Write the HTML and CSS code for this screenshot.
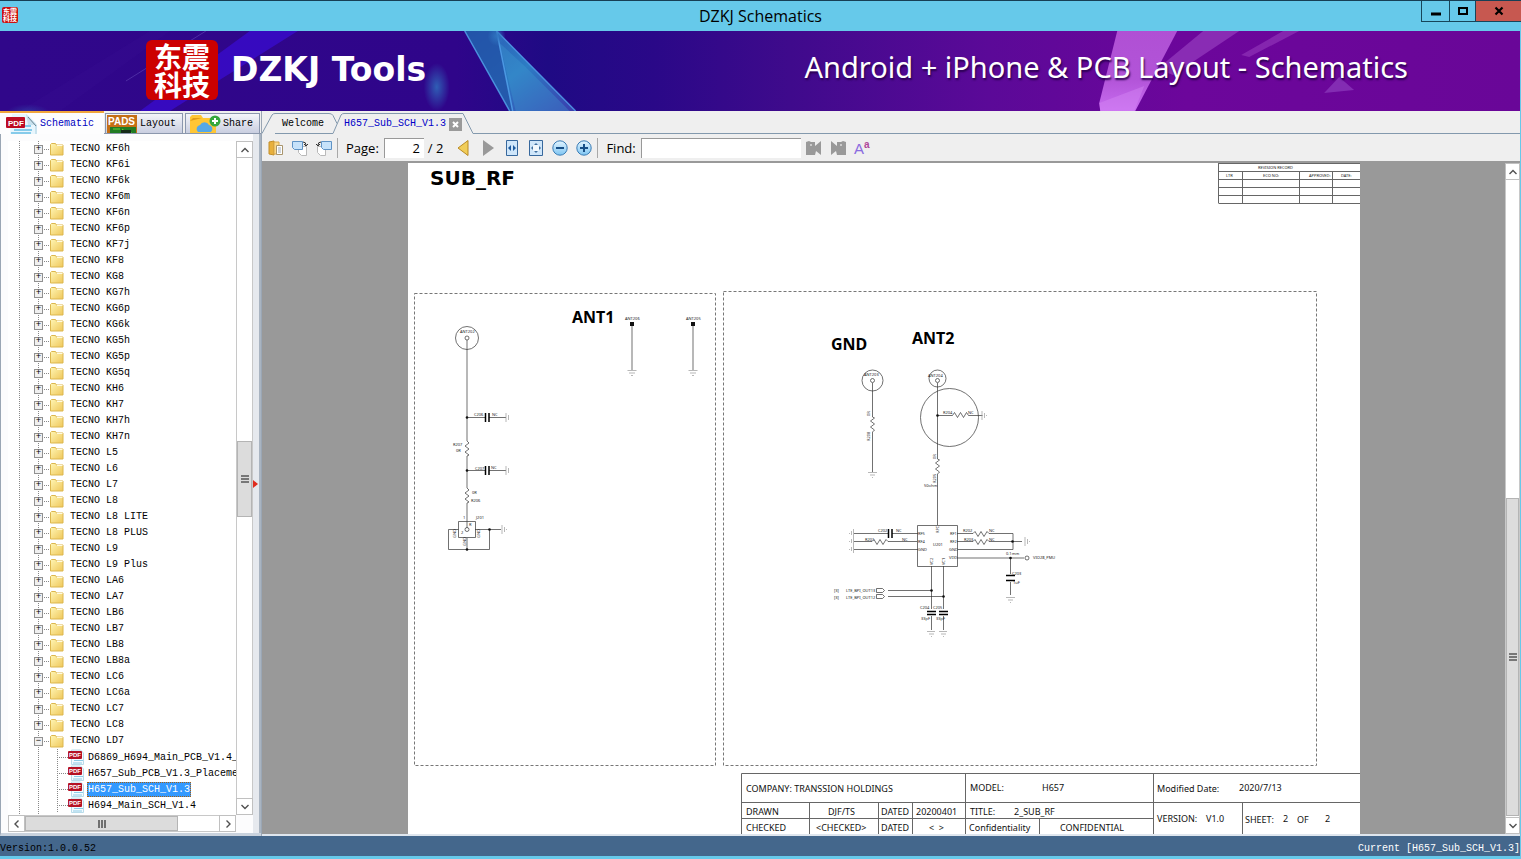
FILE: index.html
```html
<!DOCTYPE html>
<html lang="en">
<head>
<meta charset="utf-8">
<title>DZKJ Schematics</title>
<link rel="stylesheet" href="styles.css">
</head>
<body>
<svg class="defs" aria-hidden="true">
  <defs>
    <linearGradient id="gold" x1="0" y1="0" x2="1" y2="1"><stop offset="0" stop-color="#fff6b4"/><stop offset="1" stop-color="#efc75a"/></linearGradient>
    <linearGradient id="sky" x1="0" y1="0" x2="0" y2="1"><stop offset="0" stop-color="#e4f5ff"/><stop offset="1" stop-color="#7cc4f2"/></linearGradient>
    <symbol id="folder" viewBox="0 0 14 14"><path d="M.5 2.5l1-1h4l1 1.500h6.500v10h-12.500z" fill="url(#gold)" stroke="#dcb74e"/><path d="M7 3.500h5.500" stroke="#fffbe0"/></symbol>
    <symbol id="pdf" viewBox="0 0 16 16"><path d="M3.500 1h9l3 3v11.500h-12z" fill="#f4fbff" stroke="#b8dcea"/><path d="M6 11.500h9M5 14h9" stroke="#8ccbe6"/><rect y="2" width="14" height="8" rx="1" fill="#b51224"/><text x="1" y="8" class="pdf-text">PDF</text></symbol>
    <symbol id="up" viewBox="0 0 10 10"><path d="M1.500 7L5 3.500 8.500 7" fill="none" stroke="#505050" stroke-width="1.400"/></symbol>
    <symbol id="down" viewBox="0 0 10 10"><path d="M1.500 3L5 6.500 8.500 3" fill="none" stroke="#505050" stroke-width="1.400"/></symbol>
    <symbol id="left" viewBox="0 0 10 10"><path d="M6.500 1.500L3 5l3.500 3.500" fill="none" stroke="#505050" stroke-width="1.400"/></symbol>
    <symbol id="right" viewBox="0 0 10 10"><path d="M3.500 1.500L7 5 3.500 8.500" fill="none" stroke="#505050" stroke-width="1.400"/></symbol>
    <symbol id="grip" viewBox="0 0 8 8"><path d="M0 1h8M0 4h8M0 7h8" stroke="#555" stroke-width="1.600"/></symbol>
  </defs>
</svg>

<header class="titlebar">
  <div class="app-icon">东震<br>科技</div>
  <h1 class="app-title">DZKJ Schematics</h1>
  <div class="window-buttons">
    <button class="win" aria-label="Minimize"><svg width="12" height="12"><path d="M1 9h10" stroke="#000" stroke-width="3"/></svg></button>
    <button class="win" aria-label="Maximize"><svg width="12" height="12"><path d="M2 3h8v6H2z" fill="none" stroke="#000" stroke-width="2"/></svg></button>
    <button class="win close" aria-label="Close"><svg width="12" height="12"><path d="M2.500 2.500l7 7M9.500 2.500l-7 7" stroke="#000" stroke-width="2.200"/></svg></button>
  </div>
</header>

<section class="banner">
  <svg class="banner-art" viewBox="0 0 1521 80" preserveAspectRatio="none" aria-hidden="true">
    <defs>
      <linearGradient id="beam" x1="0" y1="0" x2="1" y2="1"><stop offset="0" stop-color="#2a58b4"/><stop offset=".5" stop-color="#2d7cc4"/><stop offset="1" stop-color="#3a3cae"/></linearGradient>
      <linearGradient id="pink" x1="0" y1="0" x2="0" y2="1"><stop offset="0" stop-color="#b050d4"/><stop offset=".6" stop-color="#b254d8"/><stop offset="1" stop-color="#c86cf0"/></linearGradient>
      <radialGradient id="glow"><stop offset="0" stop-color="#2f74c0"/><stop offset="1" stop-color="#2f74c0" stop-opacity="0"/></radialGradient>
    </defs>
    <path d="M250 0h48L170 80h-30z" fill="#3a0cd0" opacity=".75"/>
    <path d="M150 0h20L60 80H20z" fill="#3c1696" opacity=".2"/>
    <path d="M206 0L126 50" stroke="#5a3cb0" opacity=".7"/>
    <ellipse cx="437" cy="56" rx="13" ry="24" fill="url(#glow)" opacity=".8"/>
    <ellipse cx="28" cy="82" rx="22" ry="9" fill="url(#glow)" opacity=".4"/>
    <path d="M465 0h32l79 80h-66z" fill="url(#beam)"/>
    <path d="M465 0h32l16 80h-3z" fill="#2252a6" opacity=".8"/>
    <path d="M500 12l26 24 44 44h-54z" fill="#3f9ad2" opacity=".35"/>
    <path d="M465 0l45 80M497 0l16 80M497 0l79 80" stroke="#54a4ec" stroke-width="1.500" fill="none" opacity=".8"/>
    <ellipse cx="497" cy="5" rx="9" ry="10" fill="url(#glow)"/>
    <path d="M1118 0h60l-42 80h-35l-1-8z" fill="url(#pink)"/>
    <path d="M1100 72l45-17-10 25h-34z" fill="#d488f4" opacity=".45"/>
    <path d="M1204 0h36l-66 44-16-6z" fill="#a34cc8" opacity=".55"/>
    <path d="M1284 0h16l-50 26-8-2z" fill="#a34cc8" opacity=".45"/>
    <path d="M1340 46l15 13-30 3z" fill="#9040c0" opacity=".65"/>
  </svg>
  <div class="brand"><div class="logo">东震<br>科技</div><span class="brand-name">DZKJ Tools</span></div>
  <p class="tagline">Android + iPhone &amp; PCB Layout - Schematics</p>
</section>

<main class="workspace">
  <aside class="sidebar">
    <nav class="side-tabs">
      <button class="side-tab active"><svg width="32" height="20" viewBox="0 0 32 20"><path d="M6 0h15l9 9v11H4z" fill="#e8f6fd"/><path d="M20 0l11 11v9h-2V11h-7z" fill="#c8e2ee"/><path d="M22 3l8 9" stroke="#6b8490"/><path d="M8 16h18M5 19h20M18 12h7" stroke="#86cbea" stroke-width="2"/><rect y="3" width="19" height="11" rx="1" fill="#bd0b23"/><text x="2" y="12" class="pdf-big">PDF</text></svg>Schematic</button>
      <button class="side-tab"><svg width="32" height="20" viewBox="0 0 32 20"><rect x="1" y="1" width="30" height="19" fill="#c46f16"/><rect x="4" y="13" width="26" height="7" fill="#217b24"/><path d="M7 15h7M16 15l4 3h5v2" stroke="#69cf35" fill="none"/><rect x="15" y="16" width="10" height="4" fill="#152c19"/><text x="2" y="11" class="pads">PADS</text></svg>Layout</button>
      <button class="side-tab"><svg width="32" height="20" viewBox="0 0 32 20"><path d="M1 3l2-2h9l2 3h13v16H1z" fill="#ffc634"/><path d="M1 7l12-3h-9z" fill="#e29d16"/><path d="M9 18a4 4 0 0 1 2-7 5 5 0 0 1 9 0 4 4 0 0 1 2 7z" fill="#55a8e8"/><circle cx="26" cy="7" r="5.500" fill="#35a83d"/><path d="M26 4v6M23 7h6" stroke="#fff" stroke-width="2"/></svg>Share</button>
    </nav>
    <div class="side-body">
      <div class="tree-frame">
        <div class="tree-row">
          <ul class="tree">
            <li class="node"><button class="toggle" aria-label="Expand">+</button><svg class="ico"><use href="#folder"/></svg>TECNO KF6h</li>
            <li class="node"><button class="toggle" aria-label="Expand">+</button><svg class="ico"><use href="#folder"/></svg>TECNO KF6i</li>
            <li class="node"><button class="toggle" aria-label="Expand">+</button><svg class="ico"><use href="#folder"/></svg>TECNO KF6k</li>
            <li class="node"><button class="toggle" aria-label="Expand">+</button><svg class="ico"><use href="#folder"/></svg>TECNO KF6m</li>
            <li class="node"><button class="toggle" aria-label="Expand">+</button><svg class="ico"><use href="#folder"/></svg>TECNO KF6n</li>
            <li class="node"><button class="toggle" aria-label="Expand">+</button><svg class="ico"><use href="#folder"/></svg>TECNO KF6p</li>
            <li class="node"><button class="toggle" aria-label="Expand">+</button><svg class="ico"><use href="#folder"/></svg>TECNO KF7j</li>
            <li class="node"><button class="toggle" aria-label="Expand">+</button><svg class="ico"><use href="#folder"/></svg>TECNO KF8</li>
            <li class="node"><button class="toggle" aria-label="Expand">+</button><svg class="ico"><use href="#folder"/></svg>TECNO KG8</li>
            <li class="node"><button class="toggle" aria-label="Expand">+</button><svg class="ico"><use href="#folder"/></svg>TECNO KG7h</li>
            <li class="node"><button class="toggle" aria-label="Expand">+</button><svg class="ico"><use href="#folder"/></svg>TECNO KG6p</li>
            <li class="node"><button class="toggle" aria-label="Expand">+</button><svg class="ico"><use href="#folder"/></svg>TECNO KG6k</li>
            <li class="node"><button class="toggle" aria-label="Expand">+</button><svg class="ico"><use href="#folder"/></svg>TECNO KG5h</li>
            <li class="node"><button class="toggle" aria-label="Expand">+</button><svg class="ico"><use href="#folder"/></svg>TECNO KG5p</li>
            <li class="node"><button class="toggle" aria-label="Expand">+</button><svg class="ico"><use href="#folder"/></svg>TECNO KG5q</li>
            <li class="node"><button class="toggle" aria-label="Expand">+</button><svg class="ico"><use href="#folder"/></svg>TECNO KH6</li>
            <li class="node"><button class="toggle" aria-label="Expand">+</button><svg class="ico"><use href="#folder"/></svg>TECNO KH7</li>
            <li class="node"><button class="toggle" aria-label="Expand">+</button><svg class="ico"><use href="#folder"/></svg>TECNO KH7h</li>
            <li class="node"><button class="toggle" aria-label="Expand">+</button><svg class="ico"><use href="#folder"/></svg>TECNO KH7n</li>
            <li class="node"><button class="toggle" aria-label="Expand">+</button><svg class="ico"><use href="#folder"/></svg>TECNO L5</li>
            <li class="node"><button class="toggle" aria-label="Expand">+</button><svg class="ico"><use href="#folder"/></svg>TECNO L6</li>
            <li class="node"><button class="toggle" aria-label="Expand">+</button><svg class="ico"><use href="#folder"/></svg>TECNO L7</li>
            <li class="node"><button class="toggle" aria-label="Expand">+</button><svg class="ico"><use href="#folder"/></svg>TECNO L8</li>
            <li class="node"><button class="toggle" aria-label="Expand">+</button><svg class="ico"><use href="#folder"/></svg>TECNO L8 LITE</li>
            <li class="node"><button class="toggle" aria-label="Expand">+</button><svg class="ico"><use href="#folder"/></svg>TECNO L8 PLUS</li>
            <li class="node"><button class="toggle" aria-label="Expand">+</button><svg class="ico"><use href="#folder"/></svg>TECNO L9</li>
            <li class="node"><button class="toggle" aria-label="Expand">+</button><svg class="ico"><use href="#folder"/></svg>TECNO L9 Plus</li>
            <li class="node"><button class="toggle" aria-label="Expand">+</button><svg class="ico"><use href="#folder"/></svg>TECNO LA6</li>
            <li class="node"><button class="toggle" aria-label="Expand">+</button><svg class="ico"><use href="#folder"/></svg>TECNO LA7</li>
            <li class="node"><button class="toggle" aria-label="Expand">+</button><svg class="ico"><use href="#folder"/></svg>TECNO LB6</li>
            <li class="node"><button class="toggle" aria-label="Expand">+</button><svg class="ico"><use href="#folder"/></svg>TECNO LB7</li>
            <li class="node"><button class="toggle" aria-label="Expand">+</button><svg class="ico"><use href="#folder"/></svg>TECNO LB8</li>
            <li class="node"><button class="toggle" aria-label="Expand">+</button><svg class="ico"><use href="#folder"/></svg>TECNO LB8a</li>
            <li class="node"><button class="toggle" aria-label="Expand">+</button><svg class="ico"><use href="#folder"/></svg>TECNO LC6</li>
            <li class="node"><button class="toggle" aria-label="Expand">+</button><svg class="ico"><use href="#folder"/></svg>TECNO LC6a</li>
            <li class="node"><button class="toggle" aria-label="Expand">+</button><svg class="ico"><use href="#folder"/></svg>TECNO LC7</li>
            <li class="node"><button class="toggle" aria-label="Expand">+</button><svg class="ico"><use href="#folder"/></svg>TECNO LC8</li>
            <li class="node"><button class="toggle open" aria-label="Collapse">−</button><svg class="ico"><use href="#folder"/></svg>TECNO LD7</li>
            <li class="node file"><svg class="ico"><use href="#pdf"/></svg><span class="name">D6869_H694_Main_PCB_V1.4_</span></li>
            <li class="node file"><svg class="ico"><use href="#pdf"/></svg><span class="name">H657_Sub_PCB_V1.3_Placeme</span></li>
            <li class="node file"><svg class="ico"><use href="#pdf"/></svg><span class="name selected">H657_Sub_SCH_V1.3</span></li>
            <li class="node file"><svg class="ico"><use href="#pdf"/></svg><span class="name">H694_Main_SCH_V1.4</span></li>
          </ul>
          <div class="scroll-v">
            <button class="arrow" aria-label="Scroll up"><svg class="chev"><use href="#up"/></svg></button>
            <div class="track tree-v"><div class="thumb"><svg class="grip"><use href="#grip"/></svg></div></div>
            <button class="arrow" aria-label="Scroll down"><svg class="chev"><use href="#down"/></svg></button>
          </div>
        </div>
        <div class="scroll-h">
          <button class="arrow" aria-label="Scroll left"><svg class="chev"><use href="#left"/></svg></button>
          <div class="track tree-h"><div class="thumb"><svg class="grip turned"><use href="#grip"/></svg></div></div>
          <button class="arrow" aria-label="Scroll right"><svg class="chev"><use href="#right"/></svg></button>
        </div>
      </div>
      <div class="splitter"><svg width="5" height="8"><path d="M0 0l5 4-5 4z" fill="#e02a1c"/></svg></div>
    </div>
  </aside>

  <section class="document">
    <nav class="doc-tabs">
      <svg class="slant" width="13" height="21"><path d="M0 20.500L10 2q1-1.500 3-1.500" fill="none" stroke="#8399ad"/></svg>
      <button class="doc-tab back">Welcome</button>
      <svg class="slant" width="15" height="21"><path d="M0 .500q3 0 4 2l4 8M4 20.500L12 2q1-1.500 3-1.500M0 20.500h4" fill="none" stroke="#8399ad"/></svg>
      <div class="doc-tab current"><button class="tab-name">H657_Sub_SCH_V1.3</button><button class="tab-close" aria-label="Close tab"><svg width="7" height="7"><path d="M1 1l5 5M6 1L1 6" stroke="#fff" stroke-width="2"/></svg></button></div>
      <svg class="slant" width="10" height="21"><path d="M0 .500l10 20" fill="none" stroke="#8399ad"/></svg>
      <span class="tab-rest"></span>
    </nav>
    <div class="toolbar">
      <button class="tool" aria-label="Copy"><svg width="16" height="16"><path d="M1 2l5-1v14l-5-1z" fill="#e8b03c" stroke="#c38f2a"/><path d="M6 2h5v12H6z" fill="#fbd987" stroke="#d9a84a"/><path d="M8.500 5.500h6v9h-6z" fill="#fff" stroke="#a8946c"/><path d="M10 8h3M10 10h3M10 12h3" stroke="#9ba8b5"/></svg></button>
      <button class="tool" aria-label="Rotate right"><svg width="16" height="16"><path d="M6.500 6.500h8v9h-5l-3-3z" fill="#fff" stroke="#b9b9b9"/><path d="M.500 1.500h10v8H2.500l-2-2z" fill="#c6e2fa" stroke="#5f93c5"/><path d="M11 2q3 0 3 3M12 4l2 2 2-2" fill="none" stroke="#333"/></svg></button>
      <button class="tool" aria-label="Rotate left"><svg width="16" height="16"><path d="M1.500 6.500h8v9h-5l-3-3z" fill="#fff" stroke="#b9b9b9"/><path d="M5.500 1.500h10v8H7.500l-2-2z" fill="#c6e2fa" stroke="#5f93c5"/><path d="M5 2Q2 2 2 5M0 4l2 2 2-2" fill="none" stroke="#333"/></svg></button>
      <span class="sep"></span>
      <label class="field-label" for="page">Page:</label><input class="page-input" id="page" value="2"><span class="page-total">/ 2</span>
      <button class="tool" aria-label="Previous page"><svg width="16" height="16"><path d="M12 .500v15L2 8z" fill="#f1cd58" stroke="#b98a24"/></svg></button>
      <button class="tool" aria-label="Next page"><svg width="16" height="16"><path d="M3 0v16L14 8z" fill="#999"/></svg></button>
      <button class="tool" aria-label="Fit width"><svg width="16" height="16"><path d="M2.500 .500h11v15h-11z" fill="#cfe6fa" stroke="#37689d"/><path d="M7 5L4 8l3 3zM9 5l3 3-3 3z" fill="#1d5a9e"/></svg></button>
      <button class="tool" aria-label="Fit page"><svg width="16" height="16"><path d="M1.500 .500h13v15h-13z" fill="#cfe6fa" stroke="#37689d"/><circle cx="8" cy="8" r="3.500" fill="#f2f8fd"/><path d="M6 5l2-2 2 2zM6 11l2 2 2-2zM5 6L3 8l2 2zM11 6l2 2-2 2z" fill="#3f6f9f"/></svg></button>
      <button class="tool" aria-label="Zoom out"><svg width="16" height="16"><circle cx="8" cy="8" r="7.200" fill="url(#sky)" stroke="#397cb5"/><path d="M4 8h8" stroke="#174f87" stroke-width="2"/></svg></button>
      <button class="tool" aria-label="Zoom in"><svg width="16" height="16"><circle cx="8" cy="8" r="7.200" fill="url(#sky)" stroke="#397cb5"/><path d="M4 8h8M8 4v8" stroke="#174f87" stroke-width="2"/></svg></button>
      <span class="sep"></span>
      <label class="field-label" for="find">Find:</label><input class="find-input" id="find">
      <button class="tool" aria-label="Find previous"><svg width="16" height="16"><path d="M0 2l3-1 2 1h4v4l6-5v14l-5-4-1 4H0z" fill="#999"/><circle cx="5" cy="5" r="1" fill="#ddd"/></svg></button>
      <button class="tool" aria-label="Find next"><svg width="16" height="16"><path d="M16 2l-3-1-2 1H7v4L1 1v14l5-4 1 4h9z" fill="#999"/><circle cx="11" cy="5" r="1" fill="#ddd"/></svg></button>
      <button class="tool match-case" aria-label="Match case">A<sup>a</sup></button>
    </div>
    <div class="viewer">
      <div class="canvas">
        <svg class="sheet" width="952" height="671" viewBox="407 163 952 671" role="img" aria-label="SUB_RF schematic sheet">
          <rect x="407" y="163" width="952" height="671" fill="#fff"/>
          <text x="429" y="185" class="h-big">SUB_RF</text>
          <text x="571" y="323" class="h-mid">ANT1</text>
          <text x="830" y="350" class="h-mid">GND</text>
          <text x="911" y="344" class="h-mid">ANT2</text>
          <g class="frame"><rect x="413.500" y="293.500" width="301" height="472"/><rect x="722.500" y="291.500" width="593" height="474"/></g>

          <g class="rule">
            <path d="M1217.500 163.500h142M1217.500 171.500h142M1217.500 179.500h142M1217.500 187.500h142M1217.500 195.500h142M1217.500 203.500h142M1217.500 163v40M1241.500 171v32M1298.500 171v32M1331.500 171v32"/>
            <path d="M740.500 834v-60.500h619M740.500 802.500h619M740.500 818.500h412M964.500 773v61M1152.500 773v61M808.500 802v32M877.500 802v32M911.500 802v32M1038.500 818v16M1241.500 802v32"/>
          </g>
          <g class="micro">
            <text x="1257" y="169">REVISION RECORD</text><text x="1225" y="177">LTR</text><text x="1262" y="177">ECO NO:</text><text x="1308" y="177">APPROVED:</text><text x="1340" y="177">DATE:</text>
          </g>
          <g class="block">
            <text x="745" y="792">COMPANY: TRANSSION HOLDINGS</text><text x="745" y="815">DRAWN</text><text x="745" y="831">CHECKED</text>
            <text x="827" y="815">DJF/TS</text><text x="815" y="831">&lt;CHECKED&gt;</text><text x="880" y="815">DATED</text><text x="880" y="831">DATED</text>
            <text x="915" y="815">20200401</text><text x="928" y="831">&lt;&#160; &gt;</text>
            <text x="969" y="791">MODEL:</text><text x="1041" y="791">H657</text><text x="969" y="815">TITLE:</text><text x="1013" y="815">2_SUB_RF</text>
            <text x="968" y="831">Confidentiality</text><text x="1059" y="831">CONFIDENTIAL</text>
            <text x="1156" y="792">Modified Date:</text><text x="1238" y="791">2020/7/13</text><text x="1156" y="822">VERSION:</text><text x="1205" y="822">V1.0</text>
            <text x="1244" y="823">SHEET:</text><text x="1282" y="822">2</text><text x="1296" y="823">OF</text><text x="1324" y="822">2</text>
          </g>

          <g class="wire">
            <circle cx="466" cy="338" r="11.500"/><circle cx="466" cy="338" r="2"/>
            <path d="M466 340v101l2 2-4 3 4 3-4 3 4 3-2 1v32l2 2-4 3 4 3-4 3 4 3-2 1v25"/>
            <path d="M466 417.500h18M488 417.500h17M466 470.500h18M488 470.500h17"/>
            <path d="M457.500 521.500h17v16h-17zM457.500 529.500h-10v20h41v-20M474 529.500h26M466 538v12"/><circle cx="466" cy="529.500" r="2"/>
            <path d="M631 323v47M692 323v47"/>
            <circle cx="871.500" cy="380.500" r="10.500"/><circle cx="871.500" cy="380.500" r="2"/>
            <path d="M871.500 383v34l2 1-4 3 4 3-4 3 4 3-2 2v40"/>
            <circle cx="936.500" cy="378.500" r="8.500"/><circle cx="936.500" cy="380.500" r="2"/><circle cx="948.500" cy="417.500" r="29"/>
            <path d="M936.500 383v76l2 1-4 3 4 3-4 3 4 3-2 2v51"/>
            <path d="M936.500 415.500h15l2-3 3 5 3-5 3 5 3-5 2 3h14"/>
            <path d="M916.500 525.500h40v41h-40zM853 533.500h34M891 533.500h26M853 541.500h18l2-2 3 5 3-5 3 5 3-5 2 2h29M853 549.500h64"/>
            <path d="M956 533.500h16l2-2 3 5 3-5 3 5 3-5 2 2h24v16h-55M956 541.500h16l2-2 3 5 3-5 3 5 3-5 2 2h33"/>
            <path d="M956 558h67M1009.500 558v16M1009.500 582v13"/><circle cx="1026" cy="558" r="2"/>
            <path d="M930.500 566v43M942.500 566v43M930.500 616v14M942.500 616v14"/>
            <path d="M887 590.500h43M887 596.500h55M875.500 588.500h6l2 2-2 2h-6zM875.500 594.500h6l2 2-2 2h-6z"/>
          </g>
          <g class="ground">
            <path d="M505 413v9M507.500 415v5M505 466v9M507.500 468v5M501 525v9M503.500 527v5M505.500 529v1"/>
            <path d="M626.500 370.500h9M628 373h6M630 375.500h2M687.500 370.500h9M689 373h6M691 375.500h2"/>
            <path d="M867 472.500h9M869 475h5M871 477.500h1M981 411v9M983.500 413v5M985.500 415v1"/>
            <path d="M852.500 529v24M850.500 531v4M850.500 539v4M850.500 547v4M848.500 533v1M848.500 541v1M848.500 549v1"/>
            <path d="M1024 537v9M1026.500 539v5M1028.500 541v1M1005 597.500h9M1007 600h5M1009 602.500h1"/>
            <path d="M926 631.500h8M938 631.500h8M928 634h5M940 634h5M930 636.500h1M942 636.500h1"/>
          </g>
          <g class="plate">
            <path d="M484.500 413v9M488 413v9M484.500 466v9M488 466v9M887.500 529v9M891 529v9M1005 575.500h9M1005 580.500h9M926 611.500h9M926 614.500h9M938 611.500h9M938 614.500h9"/>
          </g>
          <g fill="#111"><circle cx="466" cy="417.500" r="1.300"/><circle cx="466" cy="470.500" r="1.300"/><circle cx="466" cy="549.500" r="1.300"/><circle cx="488.500" cy="529.500" r="1.300"/><path d="M629 322h4v4h-4zM690 322h4v4h-4z"/><circle cx="936.500" cy="415.500" r="1.300"/><circle cx="1011.500" cy="541.500" r="1.300"/><circle cx="1009.500" cy="558" r="1.300"/><circle cx="930.500" cy="590.500" r="1.300"/><circle cx="942.500" cy="596.500" r="1.300"/></g>
          <g class="micro">
            <text x="459" y="333">ANT202</text><text x="624" y="320">ANT206</text><text x="685" y="320">ANT205</text>
            <text x="473" y="416">C206</text><text x="491" y="416">NC</text><text x="474" y="470">C207</text><text x="490" y="469">NC</text>
            <text x="452" y="446">R207</text><text x="455" y="452">0R</text><text x="471" y="494">0R</text><text x="470" y="502">R206</text><text x="475" y="519">J201</text>
            <text x="462" y="519">1</text><text x="468" y="526">R</text><text x="460" y="534">2</text>
            <text transform="rotate(-90 455 538)" x="455" y="538">GND</text><text transform="rotate(-90 465 546)" x="465" y="546">GND</text><text transform="rotate(-90 479 538)" x="479" y="538">GND</text>
            <text x="863" y="376">ANT203</text><text x="927" y="377">ANT204</text><text x="942" y="414">R204</text><text x="967" y="414">NC</text>
            <text transform="rotate(-90 869 416)" x="869" y="416">0R</text><text transform="rotate(-90 869 441)" x="869" y="441">R208</text>
            <text transform="rotate(-90 935 459)" x="935" y="459">0R</text><text transform="rotate(-90 935 483)" x="935" y="483">R205</text><text x="923" y="487">50ohm</text>
            <text x="877" y="532">C202</text><text x="895" y="532">NC</text><text x="864" y="541">R201</text><text x="901" y="541">NC</text>
            <text x="917" y="535">RF5</text><text x="917" y="543">RF4</text><text x="917" y="551">GND</text><text x="932" y="546">U201</text>
            <text x="949" y="535">RF1</text><text x="949" y="543">RF2</text><text x="948" y="551">GND</text><text x="948" y="559">VDD</text>
            <text transform="rotate(-90 938 533)" x="938" y="533">RFC</text><text transform="rotate(-90 932 565)" x="932" y="565">VC2</text><text transform="rotate(-90 944 565)" x="944" y="565">VC1</text>
            <text x="962" y="532">R202</text><text x="988" y="532">NC</text><text x="963" y="541">R203</text><text x="988" y="541">NC</text>
            <text x="1005" y="555">0.1mm</text><text x="1032" y="559">VIO28_PMU</text><text x="1011" y="575">C203</text><text x="1012" y="584">1uF</text>
            <text x="833" y="592">[3]</text><text x="845" y="592">LTE_BPI_OUT13</text><text x="833" y="599">[3]</text><text x="845" y="599">LTE_BPI_OUT12</text>
            <text x="919" y="609">C204</text><text x="932" y="609">C205</text><text x="920" y="620">33pF</text><text x="935" y="620">33pF</text>
          </g>
        </svg>
      </div>
      <div class="scroll-v">
        <button class="arrow" aria-label="Page up"><svg class="chev"><use href="#up"/></svg></button>
        <div class="track view-v"><div class="thumb"><svg class="grip"><use href="#grip"/></svg></div></div>
        <button class="arrow" aria-label="Page down"><svg class="chev"><use href="#down"/></svg></button>
      </div>
    </div>
  </section>
</main>

<footer class="statusbar"><span>Version:1.0.0.52</span><span class="current-file">Current [H657_Sub_SCH_V1.3]</span></footer>
</body>
</html>
```
FILE: styles.css
```css
* { box-sizing: border-box; }

body {
  margin: 0;
  height: 100vh;
  display: flex;
  flex-direction: column;
  overflow: hidden;
  background: #66c9ea;
  padding: 0 1px 3px 0;
  font: 10px/16px "Liberation Mono", monospace;
  color: #000;
}

button {
  font: inherit;
  color: inherit;
  background: none;
  border: 0;
  padding: 0;
}

.defs { position: absolute; width: 0; height: 0; }

/* title bar */
.titlebar {
  flex: 0 0 31px;
  display: grid;
  grid-template-columns: 100px 1fr 100px;
  border-top: 1px solid #173f55;
  margin-right: -1px;
}

.app-icon {
  width: 16px;
  height: 16px;
  margin: 6px 0 0 2px;
  border-radius: 2px;
  background: #cc1010;
  color: #fff;
  text-align: center;
  font: 700 7px/7px "Noto Sans CJK SC", sans-serif;
  padding-top: 1px;
}

.app-title {
  margin: 0;
  text-align: center;
  font: 400 16px/30px "Open Sans", sans-serif;
}

.window-buttons { display: flex; height: 21px; }

.win {
  flex: 28;
  display: grid;
  place-items: center;
  border: solid #17455a;
  border-width: 0 0 1px 1px;
}

.win + .win { flex: 26; }

.win.close { flex: 46; background: #c75850; }

/* banner */
.banner {
  position: relative;
  flex: 0 0 80px;
  display: flex;
  justify-content: space-between;
  align-items: center;
  padding: 0 112px 0 146px;
  overflow: hidden;
  background: linear-gradient(90deg, #30078a 0, #2f058a 30%, #1f0a84 36%, #2a0888 43%, #3f0a8c 52%, #5b0998 65%, #6c069b 78%, #690698 100%);
  color: #fff;
}

.banner-art { position: absolute; inset: 0; width: 100%; height: 100%; }

.brand { position: relative; display: flex; align-items: center; gap: 13px; padding-bottom: 2px; }

.logo {
  width: 72px;
  height: 60px;
  border-radius: 6px;
  background: #cc0000;
  text-align: center;
  font: 700 28px/28px "Noto Sans CJK SC", sans-serif;
  padding-top: 2px;
}

.brand-name { font: 700 33px/40px "DejaVu Sans", sans-serif; }

.tagline {
  position: relative;
  margin: 0 0 8px;
  font: 400 29px/40px "Noto Sans", sans-serif;
  text-shadow: 1px 2px 2px #2a0050;
}

/* workspace */
.workspace { flex: 1; min-height: 0; display: flex; background: #efefef; }

.sidebar { flex: 0 0 261px; min-width: 0; display: flex; flex-direction: column; }

.side-tabs { flex: 0 0 23px; display: flex; align-items: flex-end; gap: 1px; border-bottom: 1px solid #8b97ad; }

.side-tab {
  flex: 0 1 78px;
  height: 20px;
  display: flex;
  align-items: center;
  gap: 2px;
  overflow: hidden;
  white-space: nowrap;
  border: 1px solid #8b97ad;
  border-bottom: 0;
  background: linear-gradient(#f4f5f9, #c9cee0);
}

.side-tab:last-child { flex-basis: 75px; margin-left: 1px; padding-left: 3px; }

.side-tab.active {
  flex: 0 0 104px;
  height: 23px;
  margin-bottom: -1px;
  padding-left: 6px;
  border: 0;
  border-top: 2px solid #f0a53c;
  background: #fdfdfe;
  color: #0000c0;
}

.side-body {
  flex: 1;
  min-height: 0;
  display: flex;
  background: #fcfcfd;
  border-left: 1px solid #9aa6b4;
  border-bottom: 3px solid #c9d2dd;
}

.tree-frame { flex: 1; min-width: 0; display: flex; flex-direction: column; padding: 7px 0 1px 7px; }

.tree-row { flex: 1; min-height: 0; display: flex; }

.tree {
  flex: 1;
  min-width: 0;
  overflow: hidden;
  margin: 0;
  padding: 0;
  list-style: none;
  background:
    repeating-linear-gradient(#888 0 1px, transparent 1px 2px) 11px 0 / 1px 100% no-repeat,
    repeating-linear-gradient(#888 0 1px, transparent 1px 2px) 30px 0 / 1px 100% no-repeat,
    #fff;
}

.node {
  height: 16px;
  display: flex;
  align-items: center;
  padding-left: 26px;
  white-space: nowrap;
  background: repeating-linear-gradient(90deg, #888 0 1px, transparent 1px 2px) 30px 8px / 12px 1px no-repeat;
}

.ico { flex: none; width: 14px; height: 14px; margin: 0 6px 0 7px; }

.toggle {
  width: 9px;
  height: 9px;
  border: 1px solid #919191;
  background: #f0f0f0;
  font: 400 9px/7px "Liberation Mono", monospace;
}

.file {
  padding-left: 53px;
  background:
    repeating-linear-gradient(#888 0 1px, transparent 1px 2px) 49px 0 / 1px 100% no-repeat,
    repeating-linear-gradient(90deg, #888 0 1px, transparent 1px 2px) 49px 8px / 12px 1px no-repeat;
}

.file .ico { width: 16px; height: 16px; margin-right: 3px; }

.file .name { padding: 0 1px; line-height: 15px; }

.file .selected { background: #3399ff; color: #fff; outline: 1px dotted #a65f10; outline-offset: -1px; }

.pdf-text { font: 700 6px "Liberation Sans", sans-serif; fill: #fff; }
.pdf-big { font: 700 8px "Liberation Sans", sans-serif; fill: #fff; }
.pads { font: 700 10px "Liberation Sans", sans-serif; fill: #fff; }

/* scroll bars */
.scroll-v { flex: 0 0 17px; display: flex; flex-direction: column; }
.scroll-h { flex: 0 0 17px; display: flex; margin-right: 17px; }

.arrow { flex: 0 0 17px; display: grid; place-items: center; border: 1px solid #c0c0c0; background: #fff; }

.chev { width: 10px; height: 10px; }

.track { flex: 1; display: grid; background: #fff; }
.scroll-v .track { border: solid #c8c8c8; border-width: 0 1px; }
.scroll-h .track { border: solid #c8c8c8; border-width: 1px 0; }

.tree-v { grid-template-rows: 283fr 77fr 281fr; }
.tree-v .thumb { grid-row: 2; }
.tree-h { grid-template-columns: 153fr 41fr; }
.view-v { grid-template-rows: 321fr 321fr 1fr; }
.view-v .thumb { grid-row: 2; }

.thumb { display: grid; place-items: center; background: #dcdcdc; outline: 1px solid #b4b4b4; outline-offset: -1px; }

.grip { width: 8px; height: 8px; }
.grip.turned { transform: rotate(90deg); }

.splitter { flex: 0 0 8px; display: grid; align-items: center; background: #e6e9ee; border-right: 2px solid #a9b4c1; }

/* document */
.document { flex: 1; min-width: 0; display: flex; flex-direction: column; border-left: 1px solid #9aa6b4; }

.doc-tabs { flex: 0 0 23px; display: flex; align-items: flex-end; }

.slant { flex: none; }

.doc-tab { height: 21px; border-top: 1px solid #8399ad; display: flex; align-items: center; }

.doc-tab.back { flex: 0 0 54px; padding: 0 0 0 7px; border-bottom: 1px solid #8399ad; }

.doc-tab.current { color: #0000c8; gap: 3px; flex: 0 0 119px; }

.tab-close { width: 13px; height: 13px; display: grid; place-items: center; background: #9a9a9a; }

.tab-rest { flex: 1; border-bottom: 1px solid #8399ad; }

.toolbar {
  flex: 0 0 29px;
  display: flex;
  align-items: center;
  gap: 8px;
  padding-left: 6px;
  border-bottom: 2px solid #999;
  font: 13px/20px "Open Sans", sans-serif;
}

.tool { flex: none; width: 16px; height: 16px; display: grid; }

.sep { flex: 0 0 1px; height: 20px; background: #a8a8a8; margin-left: -3px; }

.field-label { white-space: nowrap; margin-right: -3px; }

input {
  height: 20px;
  border: solid #999;
  border-width: 1px 0 0 1px;
  background: #fff;
  font: 13px/18px "Open Sans", sans-serif;
  padding: 0 4px;
  border-radius: 0;
}

.page-input { width: 40px; text-align: right; }
.page-total { margin: 0 5px 0 -4px; }
.find-input { width: 160px; margin-right: -3px; }

.match-case { display: block; font: 400 15px/18px "Liberation Sans", sans-serif; color: #8a6be0; white-space: nowrap; }
.match-case sup { font: 700 10px/8px "Liberation Sans", sans-serif; color: #b0489a; }

.viewer { flex: 1; min-height: 0; display: flex; border-bottom: 2px solid #dfe6ee; background: #999; }

.canvas { flex: 1; min-width: 0; overflow: hidden; display: flex; justify-content: center; }

.sheet { flex: none; display: block; }

.viewer .scroll-v { flex-basis: 15px; }

/* sheet drawing */
.h-big { font: 700 20px "DejaVu Sans", sans-serif; }
.h-mid { font: 700 16px "Noto Sans", sans-serif; }
.block { font: 9px "Noto Sans", sans-serif; fill: #111; }
.micro { font: 4px "Noto Sans", sans-serif; fill: #222; }
.frame { fill: none; stroke: #777; stroke-dasharray: 3 2; }
.rule { fill: none; stroke: #666; }
.wire { fill: none; stroke: #333; stroke-width: .7px; }
.ground { fill: none; stroke: #999; stroke-width: .7px; }
.plate { stroke: #000; stroke-width: 1.5px; }

/* status bar */
.statusbar {
  flex: 0 0 20px;
  display: flex;
  justify-content: space-between;
  align-items: flex-end;
  background: #44678c;
  line-height: 14px;
}

.current-file { color: #fff; }
```
